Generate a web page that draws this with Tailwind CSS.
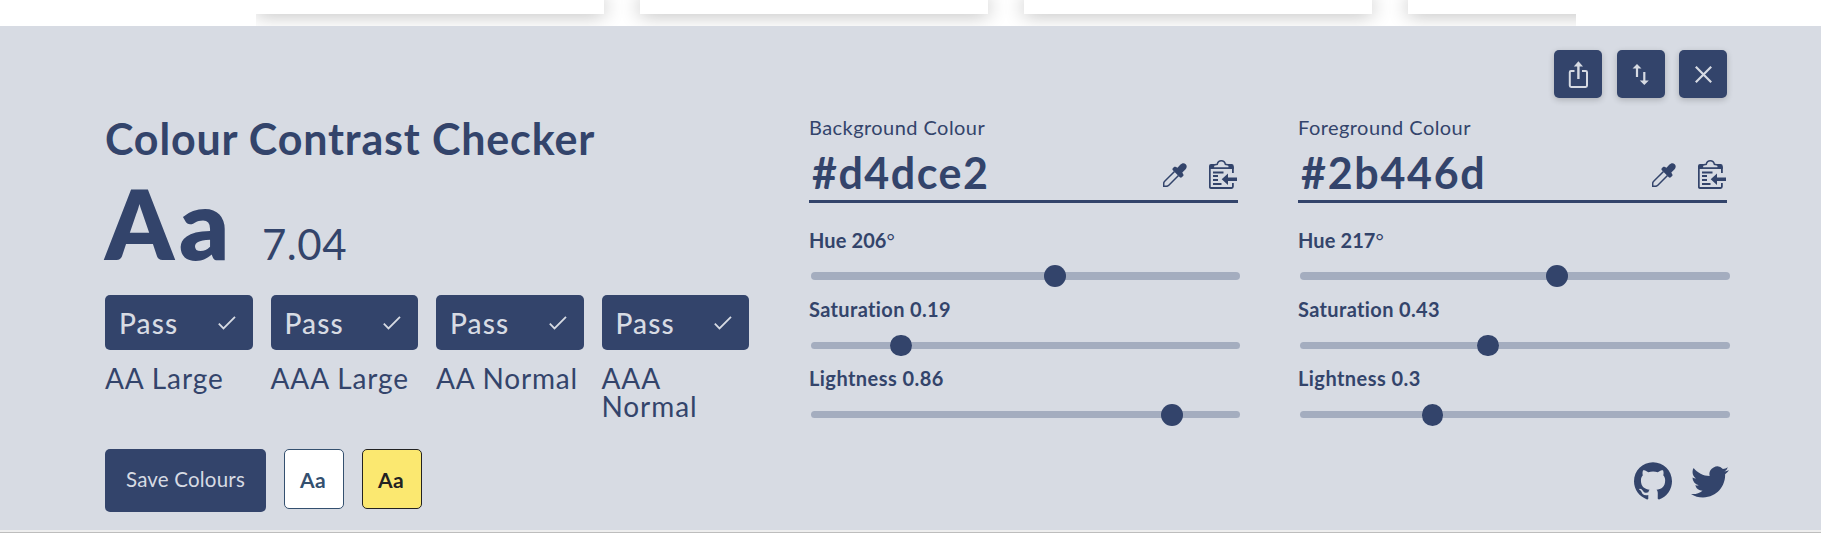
<!DOCTYPE html>
<html lang="en">
<head>
<meta charset="utf-8">
<title>Colour Contrast Checker</title>
<script src="https://cdn.jsdelivr.net/npm/@tailwindcss/browser@4"></script>
</head>
<body class="flex h-[533px] flex-col overflow-hidden bg-white font-[Lato,sans-serif] text-[#33446b]">
<svg class="hidden">
  <symbol id="picker" viewBox="0 0 24 24">
    <path d="M17.2 1.8c1.7-1.9 4-2.1 5.5-.6 1.500 1.500 1.300 3.900-.6 5.600L19.300 9.600l.8 1.500c.6.800.500 1.500 0 2l-1.300 1.200c-.6.600-1.400.500-2-.1L9.900 7.300c-.6-.6-.7-1.400-.1-2L11 4.100c.6-.6 1.300-.6 2-.1l1.500.8z" fill="currentColor"/>
    <path d="M11.500 8.500L1.700 18.200Q.7 19.200.7 20.500V23.300H3.500Q4.800 23.300 5.800 22.300L15.500 12.500" fill="none" stroke="currentColor" stroke-width="1.500"/>
  </symbol>
  <symbol id="paste" viewBox="0 0 28 29">
    <path d="M23.900 13V7.500H.8V26.500Q.8 28 2.300 28H22.500Q23.900 28 23.900 26.500V23" fill="none" stroke="currentColor" stroke-width="1.800"/>
    <path d="M0 9V6Q0 4 2 4H6.500L3.800 8.300H21L18.300 4H22.700Q24.700 4 24.700 6V9Z" fill="currentColor"/>
    <path d="M4.400 8V6.300Q4.400 5 6 4.700L8.200 4.300Q9 .8 12.300.8T16.400 4.300L18.600 4.700Q20.200 5 20.200 6.300V8Z" fill="#d7dbe3" stroke="currentColor" stroke-width="1.500"/>
    <path d="M4 12.500H14.500M4 16H9M4 20H9M4 24H12.500" stroke="currentColor" stroke-width="1.800"/>
    <path d="M12.700 19.300L19 13.500V17.600H28V21H19V25Z" fill="currentColor"/>
  </symbol>
  <symbol id="check" viewBox="0 0 18 14"><path d="M.8 7.700L5.500 12.500L17 .8" fill="none" stroke="currentColor" stroke-width="1.800"/></symbol>
</svg>

<div class="h-[26px] shrink-0 pl-[256px]">
  <div class="flex h-[26px] w-[1320px] gap-9 overflow-hidden">
    <div class="h-[14px] w-[348px] shrink-0 bg-white shadow-[0_0_20px_rgba(0,0,0,0.32)]"></div>
    <div class="h-[14px] w-[348px] shrink-0 bg-white shadow-[0_0_20px_rgba(0,0,0,0.32)]"></div>
    <div class="h-[14px] w-[348px] shrink-0 bg-white shadow-[0_0_20px_rgba(0,0,0,0.32)]"></div>
    <div class="h-[14px] w-[348px] shrink-0 bg-white shadow-[0_0_20px_rgba(0,0,0,0.32)]"></div>
  </div>
</div>

<main class="h-[504px] shrink-0 bg-[#d7dbe3] pt-6 pl-[105px] pr-[94px]">
  <div class="flex h-12 justify-end gap-[14px] text-[#d7dbe3]">
    <button class="mr-px grid size-12 place-items-center rounded-[5px] bg-[#33446b] shadow-[0_2px_6px_rgba(0,0,0,0.2)]">
      <svg class="size-12" viewBox="0 0 48 48" fill="none"><path d="M20.500 21H17Q15.800 21 15.800 22.200V35.500Q15.800 36.900 17.200 36.900H31.700Q33 36.900 33 35.500V22.200Q33 21 31.700 21H28" stroke="currentColor" stroke-width="2"/><path d="M24.400 29V14" stroke="currentColor" stroke-width="2.400"/><path d="M24.400 11.300L29 16.600H19.800Z" fill="currentColor"/></svg>
    </button>
    <button class="grid size-12 place-items-center rounded-[5px] bg-[#33446b] shadow-[0_2px_6px_rgba(0,0,0,0.2)]">
      <svg class="size-12" viewBox="0 0 48 48"><path d="M20 14L24.500 18.600H21.100V27H18.900V18.600H15.500ZM27.300 35L31.800 30.400H28.400V22H26.200V30.400H22.800Z" fill="currentColor"/></svg>
    </button>
    <button class="grid size-12 place-items-center rounded-[5px] bg-[#33446b] shadow-[0_2px_6px_rgba(0,0,0,0.2)]">
      <svg class="size-12" viewBox="0 0 48 48" fill="none"><path d="M16.800 16.800L32.200 32.200M32.200 16.800L16.800 32.200" stroke="currentColor" stroke-width="2.200"/></svg>
    </button>
  </div>

  <div class="flex">
    <section class="w-[704px] pt-[15px]">
      <h1 class="h-[50px] text-[43px] leading-[52px] font-bold tracking-[0.84px] whitespace-nowrap">Colour Contrast Checker</h1>
      <div class="flex h-[132px] items-baseline pt-[12px]">
        <span class="w-[157px] text-[97px] leading-[96px] font-extrabold tracking-[5px]">Aa</span>
        <span class="text-[42px] leading-[50px] tracking-[0.500px]">7.04</span>
      </div>
      <div class="grid w-[644px] grid-cols-4 gap-[18px] text-[28px] leading-7">
        <div class="h-[124px]"><div class="mb-[14px] flex h-[55px] items-center justify-between rounded-[5px] bg-[#33446b] pr-[17px] pl-[14px] font-medium tracking-[1.100px] text-[#d7dbe3]"><span class="pt-px">Pass</span><svg class="h-[14px] w-[18px]"><use href="#check"/></svg></div><p class="tracking-[0.900px]">AA Large</p></div>
        <div class="h-[124px]"><div class="mb-[14px] flex h-[55px] items-center justify-between rounded-[5px] bg-[#33446b] pr-[17px] pl-[14px] font-medium tracking-[1.100px] text-[#d7dbe3]"><span class="pt-px">Pass</span><svg class="h-[14px] w-[18px]"><use href="#check"/></svg></div><p class="tracking-[0.900px]">AAA Large</p></div>
        <div class="h-[124px]"><div class="mb-[14px] flex h-[55px] items-center justify-between rounded-[5px] bg-[#33446b] pr-[17px] pl-[14px] font-medium tracking-[1.100px] text-[#d7dbe3]"><span class="pt-px">Pass</span><svg class="h-[14px] w-[18px]"><use href="#check"/></svg></div><p class="tracking-[0.800px]">AA Normal</p></div>
        <div class="h-[124px]"><div class="mb-[14px] flex h-[55px] items-center justify-between rounded-[5px] bg-[#33446b] pr-[17px] pl-[14px] font-medium tracking-[1.100px] text-[#d7dbe3]"><span class="pt-px">Pass</span><svg class="h-[14px] w-[18px]"><use href="#check"/></svg></div><p class="tracking-[0.900px]">AAA<br>Normal</p></div>
      </div>
      <div class="flex gap-[18px] pt-[30px]">
        <button class="h-[63px] w-[161px] rounded-[5px] bg-[#33446b] pb-[2px] text-[20.500px] tracking-[0.200px] text-[#d7dbe3]">Save Colours</button>
        <button class="size-[60px] rounded-[5px] border border-[#34506f] bg-white pt-px pr-[2px] text-[21px] font-bold tracking-[0.400px] text-[#34506f]">Aa</button>
        <button class="size-[60px] rounded-[5px] border border-[#222] bg-[#fbe870] pt-px pr-[2px] text-[21px] font-bold tracking-[0.400px] text-[#222]">Aa</button>
      </div>
    </section>

    <section class="mr-[60px] w-[429px] pt-[17px] text-[20px] leading-6">
      <label class="block tracking-[0.44px]">Background Colour</label>
      <div class="flex h-16 items-start border-b-[3px] pt-2">
        <span class="grow pt-px pl-[3px] text-[43px] leading-[50px] font-bold tracking-[1.500px]">#d4dce2</span>
        <svg class="mt-4 mr-[22px] size-6"><use href="#picker"/></svg>
        <svg class="mt-[13px] mr-px h-[29px] w-7"><use href="#paste"/></svg>
      </div>
      <div class="pt-[25px] font-bold tracking-[0.360px]">
        <div class="h-[69px]"><p class="tracking-[0.1px]">Hue 206<span class="font-normal">°</span></p><div class="relative mt-5 ml-0.5 h-[8px] w-[429px] rounded-full bg-[#a4adbf]"><i class="absolute -top-[7px] size-[22px] rounded-full bg-[#33446b]" style="left:233px"></i></div></div>
        <div class="h-[69px]"><p>Saturation 0.19</p><div class="relative mt-[21px] ml-0.5 h-[7px] w-[429px] rounded-full bg-[#a4adbf]"><i class="absolute -top-[7px] h-[21px] w-[22px] rounded-full bg-[#33446b]" style="left:79px"></i></div></div>
        <div class="h-[69px]"><p class="tracking-[0.450px]">Lightness 0.86</p><div class="relative mt-[21px] ml-0.5 h-[7px] w-[429px] rounded-full bg-[#a4adbf]"><i class="absolute -top-[7px] size-[22px] rounded-full bg-[#33446b]" style="left:350px"></i></div></div>
      </div>
    </section>

    <section class="w-[429px] pt-[17px] text-[20px] leading-6">
      <label class="block tracking-[0.44px]">Foreground Colour</label>
      <div class="flex h-16 items-start border-b-[3px] pt-2">
        <span class="grow pt-px pl-[3px] text-[43px] leading-[50px] font-bold tracking-[1.700px]">#2b446d</span>
        <svg class="mt-4 mr-[22px] size-6"><use href="#picker"/></svg>
        <svg class="mt-[13px] mr-px h-[29px] w-7"><use href="#paste"/></svg>
      </div>
      <div class="h-[232px] pt-[25px] font-bold tracking-[0.360px]">
        <div class="h-[69px]"><p class="tracking-[0.1px]">Hue 217<span class="font-normal">°</span></p><div class="relative mt-5 ml-0.5 h-[8px] w-[430px] rounded-full bg-[#a4adbf]"><i class="absolute -top-[7px] size-[22px] rounded-full bg-[#33446b]" style="left:246px"></i></div></div>
        <div class="h-[69px]"><p>Saturation 0.43</p><div class="relative mt-[21px] ml-0.5 h-[7px] w-[430px] rounded-full bg-[#a4adbf]"><i class="absolute -top-[7px] h-[21px] w-[22px] rounded-full bg-[#33446b]" style="left:177px"></i></div></div>
        <div class="h-[69px]"><p class="tracking-[0.450px]">Lightness 0.3</p><div class="relative mt-[21px] ml-0.5 h-[7px] w-[430px] rounded-full bg-[#a4adbf]"><i class="absolute -top-[7px] h-[22px] w-[21px] rounded-full bg-[#33446b]" style="left:122px"></i></div></div>
      </div>
      <div class="-mr-0.5 flex justify-end gap-[19px] pt-[27px]">
        <svg class="size-[38px]" viewBox="0 0 16 15.700" fill="currentColor"><path d="M8 0C3.580 0 0 3.580 0 8c0 3.540 2.290 6.530 5.470 7.590.4.070.55-.17.55-.38 0-.19-.01-.82-.01-1.490-2.010.37-2.530-.49-2.690-.94-.09-.23-.48-.94-.82-1.130-.28-.15-.68-.52-.01-.53.63-.01 1.080.58 1.230.82.72 1.210 1.870.87 2.330.66.07-.52.28-.87.51-1.070-1.780-.2-3.640-.89-3.640-3.950 0-.87.31-1.590.82-2.150-.08-.2-.36-1.020.08-2.120 0 0 .67-.21 2.200.82.64-.18 1.320-.27 2-.27s1.360.09 2 .27c1.530-1.040 2.200-.82 2.200-.82.44 1.100.16 1.920.08 2.120.51.56.82 1.270.82 2.150 0 3.070-1.870 3.750-3.650 3.950.29.25.54.73.54 1.480 0 1.070-.01 1.930-.01 2.200 0 .21.15.46.55.38A8.010 8.010 0 0016 8c0-4.420-3.580-8-8-8z"/></svg>
        <svg class="mt-1 h-[32px] w-[38px]" viewBox="0 2 24 20" fill="currentColor"><path d="M23.950 4.570a10 10 0 01-2.820.77 4.960 4.960 0 002.160-2.720c-.95.550-2 .95-3.130 1.180a4.920 4.920 0 00-8.380 4.480C7.690 8.090 4.070 6.130 1.640 3.160a4.820 4.820 0 00-.67 2.480c0 1.710.87 3.210 2.190 4.100a4.900 4.900 0 01-2.230-.62v.060a4.920 4.920 0 003.950 4.830 5 5 0 01-2.210.08 4.940 4.940 0 004.600 3.420A9.870 9.870 0 010 19.540a13.990 13.990 0 007.550 2.210c9.050 0 14-7.500 14-13.980 0-.21 0-.42-.02-.63a9.940 9.940 0 002.460-2.550z"/></svg>
      </div>
    </section>
  </div>
</main>
<div class="h-0.5 shrink-0 bg-[#eeeeee]"></div>
<div class="h-px shrink-0 bg-[#bdbdbd]"></div>
</body>
</html>
